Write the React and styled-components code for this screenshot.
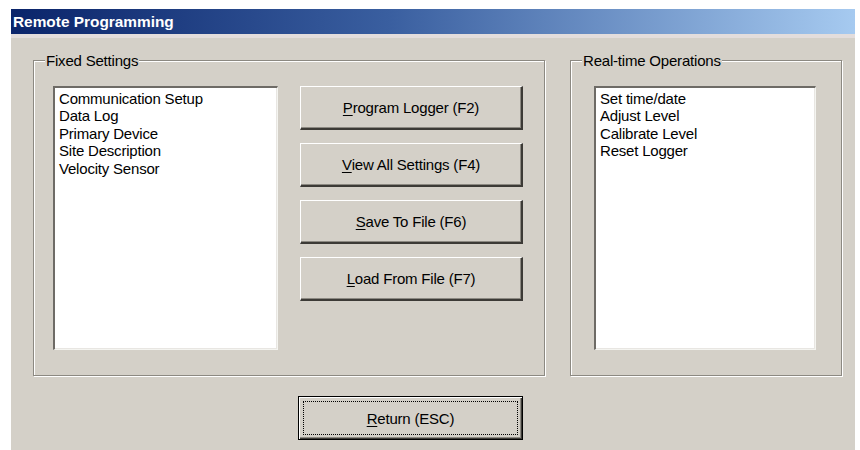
import styled, { createGlobalStyle } from 'styled-components'

const Global = createGlobalStyle`
    html, body {
        margin: 0;
        background: #fff;
    }
    body {
        font-family: "Liberation Sans", Arial, sans-serif;
    }
`

const Page = styled.div`
    padding: 9px 5px 0 11px;
    height: 450px;
    box-sizing: border-box;
`

const Window = styled.div`
    background: #d4d0c8;
    height: 441px;
    display: flex;
    flex-direction: column;
`

const TitleBar = styled.div`
    height: 25px;
    background: linear-gradient(to right, #0a246a 0%, #3a5fa0 45%, #a6caf0 100%);
    color: #fff;
    font-weight: bold;
    font-size: 15.4px;
    line-height: 25px;
    padding-left: 2px;
    border-bottom: 4px solid #e3dddc;
`

const Body = styled.div`
    flex: 1;
    display: flex;
    flex-direction: column;
    padding: 14px 0 0 22px;
`

const Row = styled.div`
    display: flex;
    gap: 25px;
`

const Group = styled.fieldset`
    margin: 0;
    width: ${p => p.$width}px;
    box-sizing: border-box;
    border: 1px solid #8c8982;
    box-shadow: inset 1px 1px 0 #fff, 1px 1px 0 #fff;
    padding: 17px ${p => p.$padRight}px 25px ${p => p.$padLeft}px;
    display: flex;
    gap: 22px;
`

// legend sits 13px in from the group's left edge, whatever the padding
const Legend = styled.legend`
    font-size: 15px;
    letter-spacing: -0.2px;
    line-height: 17px;
    color: #000;
    padding: 0 1px;
    margin-left: ${p => 11 - p.$padLeft}px;
    background: #d4d0c8;
`

const ListBox = styled.ul`
    margin: 0;
    list-style: none;
    width: ${p => p.$width}px;
    height: 264px;
    box-sizing: border-box;
    background: #fff;
    border-top: 2px solid #6e6b66;
    border-left: 2px solid #6e6b66;
    border-right: 1px solid #f4f4f0;
    border-bottom: 1px solid #f4f4f0;
    box-shadow: inset -1px -1px 0 #e8e6e2;
    padding: 2px 0 0 4px;
`

const Item = styled.li`
    font-size: 15px;
    letter-spacing: -0.2px;
    line-height: 17.4px;
    color: #000;
`

const ButtonColumn = styled.div`
    display: flex;
    flex-direction: column;
    gap: 13px;
`

const Button = styled.button`
    width: 223px;
    height: 44px;
    box-sizing: border-box;
    background: #d4d0c8;
    font-family: "Liberation Sans", Arial, sans-serif;
    font-size: 15px;
    letter-spacing: -0.2px;
    color: #000;
    padding: 0;
    border: none;
    border-top: 1px solid #fff;
    border-left: 1px solid #fff;
    border-right: 2px solid #3c3a36;
    border-bottom: 2px solid #3c3a36;
    box-shadow: inset -1px -1px 0 #8c8982;
    cursor: default;
    display: flex;
    align-items: center;
    justify-content: center;
`

const DefaultButton = styled(Button)`
    margin: 20px 0 0 265px;
    width: 225px;
    border: 1px solid #000;
    box-shadow: inset 1px 1px 0 #fff, inset -1px -1px 0 #3c3a36, inset -2px -2px 0 #8c8982;
    padding: 4px;
`

const FocusRing = styled.span`
    flex: 1;
    align-self: stretch;
    border: 1px dotted #000;
    display: flex;
    align-items: center;
    justify-content: center;
`

const Key = styled.u`
    text-decoration: underline;
    text-underline-offset: 2px;
`

const fixedSettings = [
    'Communication Setup',
    'Data Log',
    'Primary Device',
    'Site Description',
    'Velocity Sensor',
]

const operations = ['Set time/date', 'Adjust Level', 'Calibrate Level', 'Reset Logger']

const actions = [
    ['P', 'rogram Logger (F2)'],
    ['V', 'iew All Settings (F4)'],
    ['S', 'ave To File (F6)'],
    ['L', 'oad From File (F7)'],
]

const App = () => {
    return (
        <Page>
            <Global />
            <Window>
                <TitleBar>Remote Programming</TitleBar>
                <Body>
                    <Row>
                        <Group $width={512} $padLeft={19} $padRight={20}>
                            <Legend $padLeft={19}>Fixed Settings</Legend>
                            <ListBox $width={225}>
                                {fixedSettings.map(s => <Item key={s}>{s}</Item>)}
                            </ListBox>
                            <ButtonColumn>
                                {actions.map(([k, rest]) => (
                                    <Button key={k}><Key>{k}</Key>{rest}</Button>
                                ))}
                            </ButtonColumn>
                        </Group>
                        <Group $width={272} $padLeft={23} $padRight={25}>
                            <Legend $padLeft={23}>Real-time Operations</Legend>
                            <ListBox $width={222}>
                                {operations.map(s => <Item key={s}>{s}</Item>)}
                            </ListBox>
                        </Group>
                    </Row>
                    <DefaultButton>
                        <FocusRing><Key>R</Key>eturn (ESC)</FocusRing>
                    </DefaultButton>
                </Body>
            </Window>
        </Page>
    )
}

export default App
